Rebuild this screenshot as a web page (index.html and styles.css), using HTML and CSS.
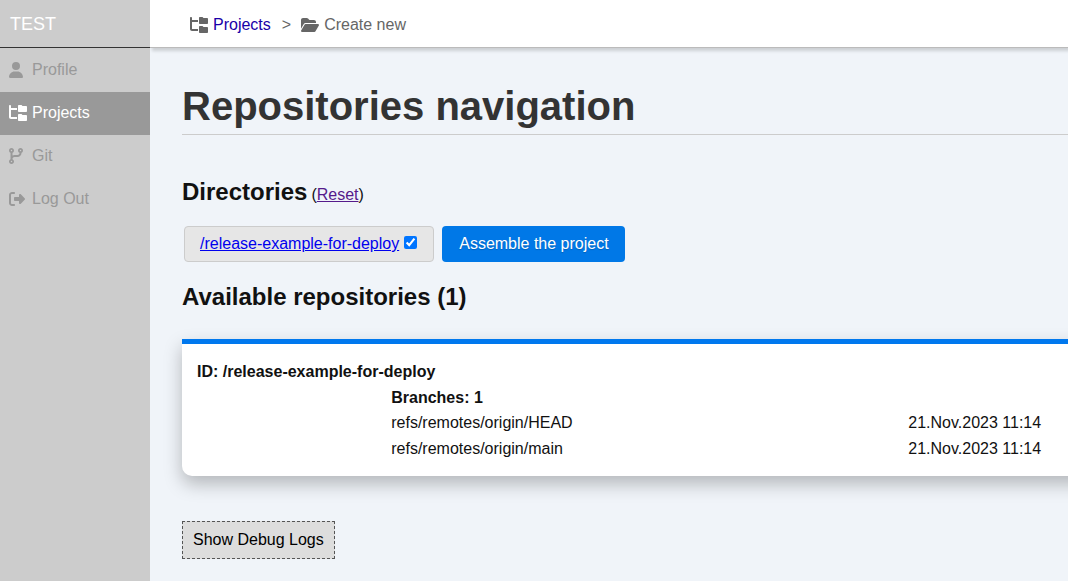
FILE: index.html
```html
<!DOCTYPE html>
<html lang="en">
<head>
<meta charset="utf-8">
<title>Repositories navigation</title>
<link rel="stylesheet" href="styles.css">
</head>
<body>
<svg class="sprite" aria-hidden="true">
  <symbol id="user" viewBox="0 0 576 512"><path d="M224 256A128 128 0 1 0 224 0a128 128 0 1 0 0 256zm-45.7 48C79.800 304 0 383.800 0 482.300C0 498.700 13.300 512 29.700 512H418.300c16.400 0 29.700-13.300 29.700-29.700C448 383.800 368.200 304 269.700 304H178.300z"/></symbol>
  <symbol id="tree" viewBox="0 0 576 512"><path d="M64 32C64 14.300 49.700 0 32 0S0 14.300 0 32v96V384c0 35.300 28.700 64 64 64H256V384H64V160H256V96H64V32zM288 192c0 17.700 14.300 32 32 32H544c17.700 0 32-14.300 32-32V64c0-17.700-14.300-32-32-32H445.300c-8.500 0-16.600-3.400-22.600-9.400L409.400 9.400c-6-6-14.100-9.400-22.600-9.400H320c-17.700 0-32 14.300-32 32V192zm0 288c0 17.700 14.300 32 32 32H544c17.700 0 32-14.300 32-32V352c0-17.700-14.300-32-32-32H445.300c-8.500 0-16.600-3.400-22.600-9.400l-13.300-13.300c-6-6-14.100-9.400-22.600-9.400H320c-17.700 0-32 14.300-32 32V480z"/></symbol>
  <symbol id="branch" viewBox="0 0 576 512"><path fill-rule="evenodd" d="M80 104a24 24 0 1 0 0-48 24 24 0 1 0 0 48zm80-24c0 32.800-19.700 61-48 73.300v87.800c18.800-10.900 40.700-17.100 64-17.100h96c35.300 0 64-28.700 64-64v-6.700C307.700 141 288 112.800 288 80c0-44.200 35.800-80 80-80s80 35.800 80 80c0 32.800-19.700 61-48 73.300V160c0 70.700-57.300 128-128 128H176c-35.300 0-64 28.700-64 64v6.700c28.300 12.300 48 40.500 48 73.300c0 44.200-35.800 80-80 80s-80-35.800-80-80c0-32.800 19.700-61 48-73.300V352 153.300C19.700 141 0 112.800 0 80C0 35.800 35.800 0 80 0s80 35.800 80 80zm232 0a24 24 0 1 0 -48 0 24 24 0 1 0 48 0zM80 456a24 24 0 1 0 0-48 24 24 0 1 0 0 48z"/></symbol>
  <symbol id="logout" viewBox="0 0 576 512"><path d="M377.900 105.900L500.700 228.700c7.200 7.200 11.300 17.100 11.300 27.300s-4.100 20.100-11.300 27.300L377.900 406.100c-6.400 6.400-15 9.900-24 9.900c-18.700 0-33.900-15.200-33.900-33.900l0-62.100-128 0c-17.700 0-32-14.300-32-32l0-64c0-17.700 14.300-32 32-32l128 0 0-62.100c0-18.700 15.200-33.900 33.900-33.900c9 0 17.600 3.600 24 9.900zM160 96L96 96c-17.700 0-32 14.300-32 32l0 256c0 17.700 14.300 32 32 32l64 0c17.700 0 32 14.300 32 32s-14.300 32-32 32l-64 0c-53 0-96-43-96-96L0 128C0 75 43 32 96 32l64 0c17.700 0 32 14.300 32 32s-14.300 32-32 32z"/></symbol>
  <symbol id="folder" viewBox="0 0 576 512"><path d="M88.700 223.800L0 375.800V96C0 60.700 28.700 32 64 32H181.500c17 0 33.300 6.700 45.300 18.700l26.500 26.500c12 12 28.300 18.700 45.300 18.700H416c35.300 0 64 28.700 64 64v32H144c-22.800 0-43.800 12.100-55.300 31.800zm27.600 16.100C122.100 230 132.600 224 144 224H544c11.500 0 22 6.100 27.700 16.100s5.700 22.200-.1 32.100l-112 192C453.900 474 443.400 480 432 480H32c-11.500 0-22-6.100-27.700-16.100s-5.700-22.200 .1-32.100l112-192z"/></symbol>
</svg>
<div class="layout">
  <nav class="sidebar">
    <a class="brand" href="#">TEST</a>
    <ul class="menu">
      <li><a class="menu-link" href="#"><svg class="icon"><use href="#user"/></svg>Profile</a></li>
      <li><a class="menu-link selected" href="#"><svg class="icon"><use href="#tree"/></svg>Projects</a></li>
      <li><a class="menu-link" href="#"><svg class="icon"><use href="#branch"/></svg>Git</a></li>
      <li><a class="menu-link" href="#"><svg class="icon"><use href="#logout"/></svg>Log Out</a></li>
    </ul>
  </nav>
  <main class="main">
    <div class="breadcrumbs">
      <svg class="icon"><use href="#tree"/></svg>
      <a class="crumb-link" href="#">Projects</a>
      <span class="separator">&gt;</span>
      <svg class="icon"><use href="#folder"/></svg>
      <span>Create new</span>
    </div>
    <div class="content">
      <h1 class="title">Repositories navigation</h1>
      <div class="section-head">
        <h2 class="subtitle">Directories</h2>
        <span>(<a class="reset" href="#">Reset</a>)</span>
      </div>
      <form class="actions">
        <div class="directory">
          <a class="directory-link" id="dir-name" href="#">/release-example-for-deploy</a>
          <input class="check" type="checkbox" aria-labelledby="dir-name" checked>
        </div>
        <button class="assemble" type="button">Assemble the project</button>
      </form>
      <h2 class="subtitle">Available repositories (1)</h2>
      <section class="card">
        <div class="repo-id">ID: /release-example-for-deploy</div>
        <table class="branches">
          <thead>
            <tr><th class="name" colspan="2">Branches: 1</th></tr>
          </thead>
          <tbody>
            <tr><td class="name">refs/remotes/origin/HEAD</td><td class="date">21.Nov.2023 11:14</td></tr>
            <tr><td class="name">refs/remotes/origin/main</td><td class="date">21.Nov.2023 11:14</td></tr>
          </tbody>
        </table>
      </section>
      <button class="debug" type="button">Show Debug Logs</button>
    </div>
  </main>
</div>
</body>
</html>
```
FILE: styles.css
```css
* {
  box-sizing: border-box;
}

body {
  margin: 0;
  background: #f0f4f9;
  color: #111;
  font-family: "Liberation Sans", Arial, sans-serif;
  font-size: 16px;
  line-height: 26px;
}

.sprite {
  display: none;
}

.icon {
  width: 18px;
  height: 16px;
  flex: none;
  fill: currentColor;
}

.layout {
  display: flex;
  min-height: 100vh;
}

.sidebar {
  width: 150px;
  flex: none;
  background: #ccc;
}

.brand {
  display: block;
  padding: 11px 10px 9px;
  border-bottom: 1px solid #333;
  color: #fff;
  font-size: 18px;
  line-height: 27px;
  text-decoration: none;
}

.menu {
  margin: 0;
  padding: 1px 0 0;
  list-style: none;
}

.menu-link {
  display: flex;
  align-items: center;
  gap: 5px;
  padding: 7px 9px 9px;
  color: #999;
  line-height: 27px;
  text-decoration: none;
}

.menu-link.selected {
  background: #999;
  color: #fff;
}

.main {
  flex: 1;
  min-width: 0;
  overflow: hidden;
}

.breadcrumbs {
  display: flex;
  align-items: center;
  gap: 5px;
  height: 48px;
  padding: 2px 40px 0;
  border-bottom: 1px solid #bbb;
  background: #fff;
  box-shadow: 2px 3px 3px rgba(0, 0, 0, 0.15);
  color: #666;
}

.crumb-link {
  color: #1a00a8;
  text-decoration: none;
}

.separator {
  padding: 0 5px 0 6px;
}

.content {
  padding: 32px 0 22px 32px;
}

.title {
  margin: 0 0 40px;
  padding-bottom: 2px;
  border-bottom: 1px solid #ccc;
  color: #333;
  font-size: 40px;
  line-height: 52px;
}

.section-head {
  display: flex;
  align-items: baseline;
  gap: 4px;
  margin-bottom: 17px;
}

.subtitle {
  margin: 0;
  font-size: 24px;
  line-height: 34px;
}

.reset {
  color: #551a8b;
}

.actions {
  display: flex;
  gap: 8px;
  margin: 0 2px 18px;
}

.directory {
  display: flex;
  align-items: center;
  gap: 5px;
  height: 36px;
  padding: 0 16px 0 15px;
  border: 1px solid #ccc;
  border-radius: 4px;
  background: #e6e6e6;
}

.directory-link {
  color: #00e;
}

.check {
  width: 13px;
  height: 13px;
  margin: 0 0 3px;
}

.assemble {
  height: 36px;
  padding: 0 16px 0 17px;
  border: 0;
  border-radius: 4px;
  background: #0078e7;
  color: #fff;
  font: inherit;
  text-shadow: 0 1px 1px rgba(0, 0, 0, 0.2);
}

.card {
  margin: 25px -24px 45px 0;
  padding: 15px 24px 14px 15px;
  border-top: 5px solid #0078ee;
  border-radius: 0 0 0 10px;
  background: #fff;
  box-shadow: 0 8px 18px rgba(0, 0, 0, 0.25);
}

.repo-id {
  font-weight: bold;
}

.branches {
  width: 77.7%;
  margin-left: auto;
  border-collapse: collapse;
}

.branches th,
.branches td {
  padding: 0;
  text-align: left;
}

.branches th {
  line-height: 25px;
}

.name {
  width: 76.4%;
}

.debug {
  display: block;
  height: 38px;
  padding: 0 10px;
  border: 1px dashed #555;
  background: #ddd;
  color: #000;
  font: inherit;
}
```
